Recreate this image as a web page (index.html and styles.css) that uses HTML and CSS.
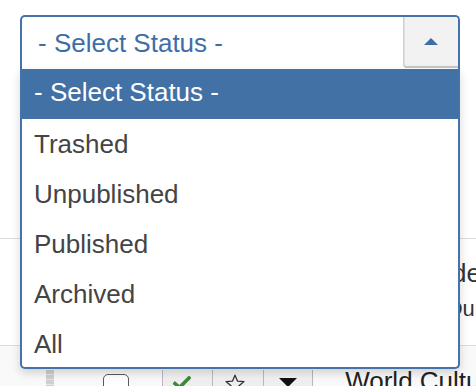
FILE: index.html
```html
<!DOCTYPE html>
<html lang="en">
<head>
<meta charset="utf-8">
<title>Select Status</title>
<link rel="stylesheet" href="styles.css">
</head>
<body>
  <div class="toolbar">
    <div class="chzn">
      <div class="chzn-single">
        <span class="chzn-label">- Select Status -</span>
        <div class="chzn-btn"><i class="tri"></i></div>
      </div>
      <ul class="results">
        <li class="hl">- Select Status -</li>
        <li>Trashed</li>
        <li>Unpublished</li>
        <li>Published</li>
        <li>Archived</li>
        <li>All</li>
      </ul>
    </div>
  </div>

  <div class="list">
    <div class="row row1">
      <span class="handle"></span>
      <span class="cb"></span>
      <div class="btns">
        <span class="b"></span><span class="b"></span><span class="b"></span>
      </div>
      <div class="title">
        <div class="t1">Basic Mode</div>
        <div class="t2">Category: Durban</div>
      </div>
    </div>
    <div class="row row2">
      <span class="handle"></span>
      <span class="cb"></span>
      <div class="btns">
        <span class="b">
          <svg class="ic-check" width="18" height="14" viewBox="0 0 18 14"><path d="M2 7.5 L6.5 11.5 L16 2" fill="none" stroke="#3c8a3c" stroke-width="3.6" stroke-linecap="square"/></svg>
        </span>
        <span class="b">
          <svg class="ic-star" width="22" height="20" viewBox="0 0 22 20"><polygon points="11,1.2 13.6,7.2 20,7.6 15,11.8 16.6,18.3 11,14.8 5.4,18.3 7,11.8 2,7.6 8.4,7.2" fill="none" stroke="#333" stroke-width="1.3" stroke-linejoin="round"/></svg>
        </span>
        <span class="b">
          <svg class="ic-caret" width="18" height="10" viewBox="0 0 18 10"><polygon points="0,0 18,0 9,9" fill="#111"/></svg>
        </span>
      </div>
      <div class="title">
        <div class="t1 dark">World Cultures</div>
      </div>
    </div>
  </div>
</body>
</html>
```

FILE: styles.css
```css
* { box-sizing: border-box; }

html, body {
  margin: 0;
  padding: 0;
  background: #fff;
  overflow: hidden;
}

body {
  width: 476px;
  height: 386px;
  font-family: "Liberation Sans", Arial, Helvetica, sans-serif;
}

.toolbar {
  padding: 15px 16px 0 20px;
}

.chzn {
  position: relative;
  width: 440px;
  z-index: 2;
}

.chzn-single {
  display: flex;
  height: 54px;
  border: 2px solid #4472a9;
  border-bottom: 0;
  border-radius: 5px 5px 0 0;
  background: #fff;
  color: #3e6ea6;
  font-size: 26px;
}

.chzn-label {
  flex: 1;
  padding-left: 16px;
  line-height: 52px;
  white-space: nowrap;
}

.chzn-btn {
  align-self: flex-start;
  width: 55px;
  height: 51px;
  background: #f2f2f2;
  border-left: 1px solid #cdcdcd;
  border-bottom: 2px solid #c6c6c6;
  border-radius: 0 3px 0 4px;
  box-shadow: inset 1px 0 0 #e2e2e2;
  display: flex;
  align-items: center;
  justify-content: center;
}

.tri {
  display: block;
  width: 0;
  height: 0;
  border-left: 7.5px solid transparent;
  border-right: 7.5px solid transparent;
  border-bottom: 7px solid #3e6ea6;
}

.results {
  position: absolute;
  top: 100%;
  left: 0;
  right: 0;
  margin: 0;
  padding: 0;
  list-style: none;
  background: #fff;
  border: 2px solid #4472a9;
  border-top: 0;
  border-radius: 0 0 5px 5px;
  box-shadow: 0 4px 10px rgba(0, 0, 0, 0.16);
  font-size: 26px;
  color: #444;
}

.results li {
  height: 50px;
  line-height: 50px;
  padding-left: 12px;
  white-space: nowrap;
}

.results li:last-child {
  height: 48px;
}

.results li.hl {
  line-height: 47px;
  background: #4271a5;
  color: #fff;
}

/* background article list */
.list {
  margin-top: 169px;
}

.row {
  display: flex;
  align-items: flex-start;
  border-top: 1px solid #dddddd;
  white-space: nowrap;
}

.row > * {
  flex-shrink: 0;
}

.row1 {
  height: 107px;
  padding-top: 21px;
}

.row2 {
  height: 80px;
  padding-top: 24px;
  background: #f9f9f9;
}

.handle {
  margin-left: 46px;
  width: 8px;
  height: 30px;
  background: repeating-linear-gradient(to bottom, #cfcfcf 0, #cfcfcf 4px, #e4e4e4 4px, #e4e4e4 5px);
}

.cb {
  margin-left: 49px;
  margin-top: 4px;
  width: 26px;
  height: 26px;
  border: 1.5px solid #5a5a5a;
  border-radius: 5px;
  background: #fff;
}

.btns {
  display: flex;
  margin-left: 33px;
  height: 34px;
}

.btns .b {
  flex-shrink: 0;
  width: 50.4px;
  height: 34px;
  border-left: 1px solid #b9b9b9;
  background: linear-gradient(#f4f4f4, #e6e6e6);
}

.btns .b:last-child {
  border-right: 1px solid #b9b9b9;
}

.ic-check {
  display: block;
  margin: 6px 0 0 10px;
}

.ic-star {
  display: block;
  margin: 4px 0 0 11px;
}

.ic-caret {
  display: block;
  margin: 8px 0 0 15px;
}

.title {
  margin-left: 32px;
  color: #333;
}

.t1 {
  font-size: 26px;
  line-height: 26px;
}

.t2 {
  font-size: 22px;
  line-height: 22px;
  margin-top: 12px;
}

.row2 .title {
  margin-top: -2px;
}

.dark {
  color: #222;
}
```
